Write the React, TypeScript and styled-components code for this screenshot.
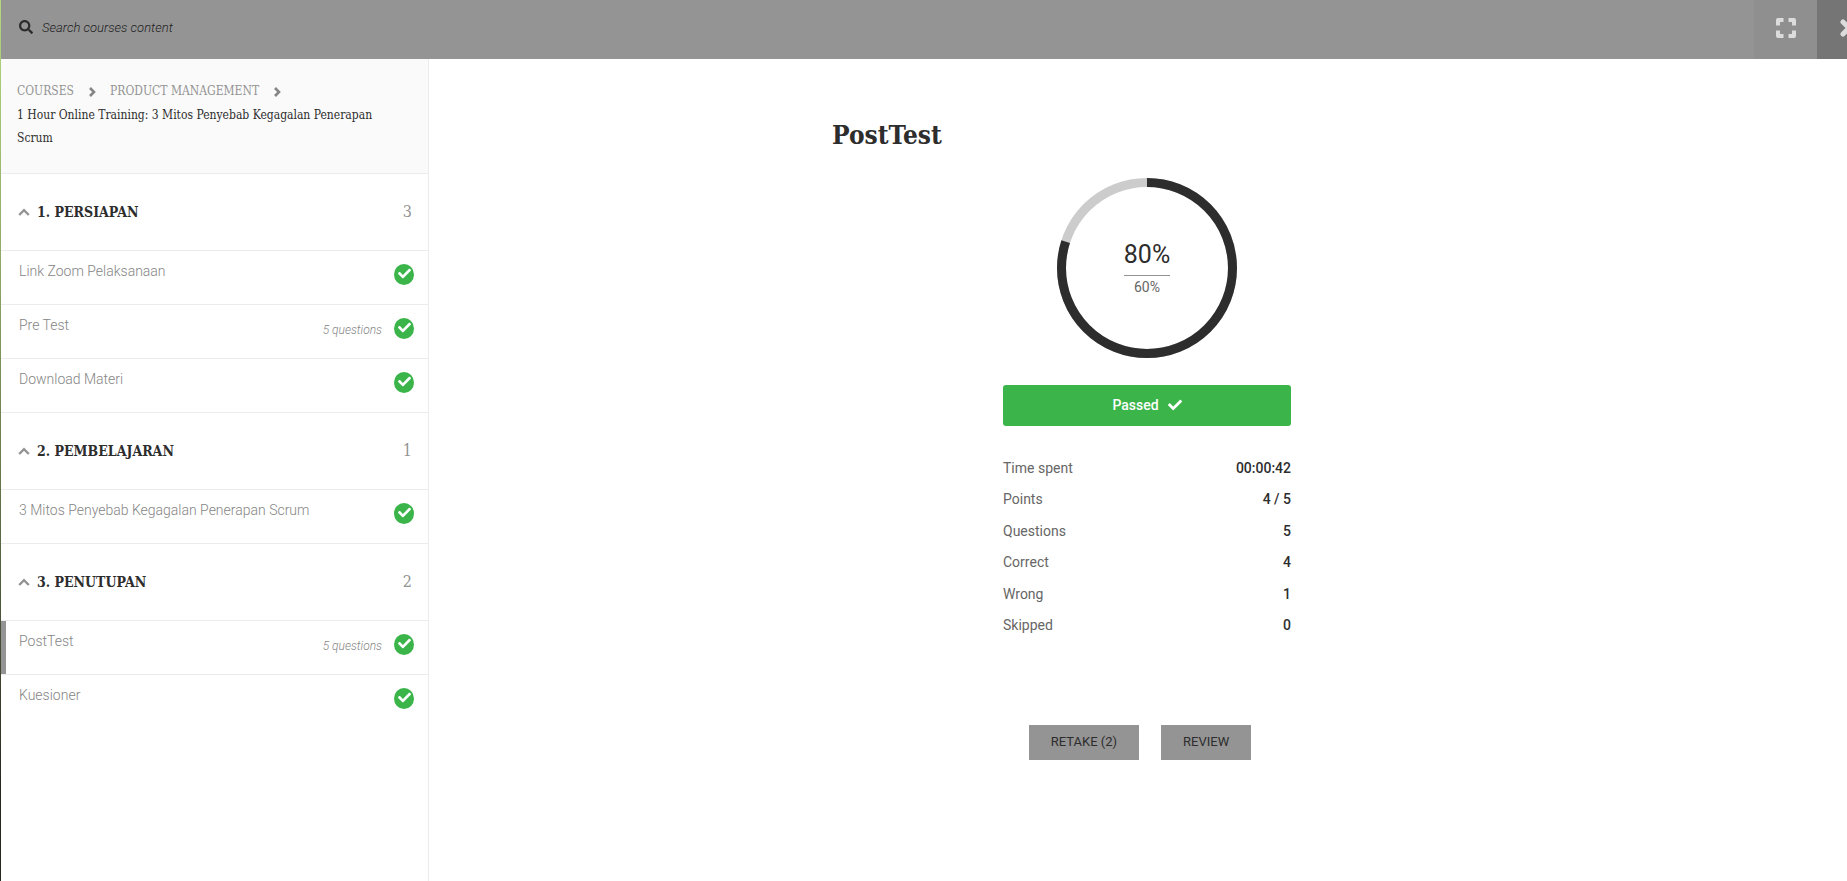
import React, { useState } from 'react';
import styled, { createGlobalStyle } from 'styled-components';
import { FaCheck, FaSearch } from 'react-icons/fa';

const sans = `Roboto, "Liberation Sans", sans-serif`;
const slab = `"Roboto Slab", "DejaVu Serif Condensed", "DejaVu Serif", serif`;

const GlobalStyle = createGlobalStyle`
  *, *::before, *::after { box-sizing: border-box; }
  body {
    margin: 0;
    background: #fff;
    color: #2d2d2d;
    font-family: ${sans};
    overflow-x: hidden;
  }
  button, input { font: inherit; color: inherit; }
`;

const Page = styled.div`
  display: grid;
  grid-template-columns: 1px minmax(0, 1fr);
  min-height: 100vh;
`;

const EdgeStrip = styled.div`
  background: linear-gradient(#b5d87f 0, #8fa866 30%, #5d6b45 60%, #26261f 90%);
`;

const Shell = styled.div`
  display: flex;
  flex-direction: column;
`;

const TopBar = styled.header`
  display: flex;
  height: 59px;
  background: #949494;
  overflow: hidden;
`;

const Search = styled.label`
  display: flex;
  flex: 1;
  align-items: center;
  gap: 9px;
  padding: 0 18px 5px;
  font-size: 14px;
`;

const SearchInput = styled.input`
  flex: 1;
  padding: 0;
  border: 0;
  outline: 0;
  background: none;
  font-size: 13px;
  font-style: italic;
  font-weight: 300;
  &::placeholder { color: #1f1f1f; opacity: 1; }
`;

const BarButton = styled.button<{ $close?: boolean }>`
  display: flex;
  flex: none;
  align-items: center;
  justify-content: center;
  width: 63px;
  padding: 0 0 4px;
  border: 0;
  margin-right: ${p => (p.$close ? '-33px' : '0')};
  background: ${p => (p.$close ? '#757575' : '#8f8f8f')};
  color: #dcdcdc;
`;

const Columns = styled.div`
  display: grid;
  flex: 1;
  grid-template-columns: 428px minmax(0, 1fr);
`;

const Sidebar = styled.aside`
  border-right: 1px solid #ececec;
`;

const Breadcrumbs = styled.nav`
  height: 115px;
  padding: 20px 28px 0 16px;
  border-bottom: 1px solid #ececec;
  background: #fafafa;
  font-family: ${slab};
  font-size: 12px;
  line-height: 23px;
`;

const Trail = styled.div`
  display: flex;
  align-items: center;
  gap: 14px;
  height: 25px;
`;

const TrailLink = styled.a`
  color: #939393;
  text-decoration: none;
  text-transform: uppercase;
`;

const SectionHead = styled.button`
  display: flex;
  align-items: center;
  width: 100%;
  height: 77px;
  padding: 0 16px 1px 17px;
  border: 0;
  border-bottom: 1px solid #ececec;
  background: none;
  text-align: left;
`;

const SectionTitle = styled.span`
  flex: 1;
  padding-left: 7px;
  font-family: ${slab};
  font-size: 14px;
  font-weight: 700;
  text-transform: uppercase;
`;

const Count = styled.span`
  color: #939393;
  font-family: ${slab};
  font-size: 16px;
`;

const Lessons = styled.ul`
  margin: 0;
  padding: 0;
  list-style: none;
`;

const Lesson = styled.li<{ $last: boolean }>`
  border-bottom: ${p => (p.$last ? '0' : '1px solid #ececec')};
`;

const LessonLink = styled.a<{ $active?: boolean }>`
  display: flex;
  align-items: flex-start;
  height: 53px;
  padding: 13px 14px 0 ${p => (p.$active ? '13px' : '18px')};
  border-left: ${p => (p.$active ? '5px solid #949494' : '0')};
  color: #858585;
  font-size: 14px;
  font-weight: 300;
  line-height: 15px;
  text-decoration: none;
`;

const LessonName = styled.span`
  flex: 1;
`;

const Note = styled.span`
  margin-right: 12px;
  font-size: 12px;
  font-style: italic;
  line-height: 24px;
`;

const Done = styled.span`
  display: flex;
  justify-content: center;
  width: 20px;
  height: 21px;
  padding-top: 3px;
  border-radius: 50%;
  background: #3bb44a;
  color: #fff;
  font-size: 13px;
`;

const Main = styled.main`
  padding: 58px 0 40px 18px;
`;

const Result = styled.section`
  display: flex;
  flex-direction: column;
  align-items: center;
  max-width: 630px;
  margin: 0 auto;
`;

const Title = styled.h1`
  align-self: flex-start;
  margin: 0 0 24px;
  font-family: ${slab};
  font-size: 26px;
  font-weight: 700;
  line-height: 37px;
`;

const Gauge = styled.div`
  display: grid;
  place-items: center;
  > * { grid-area: 1 / 1; }
`;

const Score = styled.div`
  text-align: center;
`;

const Percent = styled.div`
  padding-bottom: 3px;
  border-bottom: 1px solid #939393;
  font-size: 25px;
  font-weight: 400;
  line-height: 34px;
`;

const PassMark = styled.div`
  color: #666;
  font-size: 14px;
  line-height: 23px;
`;

const Summary = styled.div`
  width: 288px;
  margin-top: 27px;
`;

const Passed = styled.div`
  display: flex;
  align-items: center;
  justify-content: center;
  gap: 9px;
  height: 41px;
  padding-bottom: 2px;
  border-radius: 3px;
  background: #3bb44a;
  color: #fff;
  font-size: 14px;
  font-weight: 500;
`;

const Stats = styled.table`
  width: 100%;
  height: 189px;
  margin-top: 26px;
  border-collapse: collapse;
  font-size: 14px;
  th, td { padding: 0; }
  th { color: #666; font-weight: 400; text-align: left; }
  td { font-weight: 500; text-align: right; }
`;

const Actions = styled.div`
  display: flex;
  gap: 22px;
  margin: 84px 14px 0 0;
`;

const ActionButton = styled.button`
  height: 35px;
  padding: 0 22px 2px;
  border: 0;
  background: #949494;
  color: #2d2d2d;
  font-size: 13px;
  text-transform: uppercase;
`;

interface LessonData { name: string; note?: string; active?: boolean }

const sections: { title: string; lessons: LessonData[] }[] = [
  {
    title: '1. Persiapan',
    lessons: [
      { name: 'Link Zoom Pelaksanaan' },
      { name: 'Pre Test', note: '5 questions' },
      { name: 'Download Materi' },
    ],
  },
  { title: '2. Pembelajaran', lessons: [{ name: '3 Mitos Penyebab Kegagalan Penerapan Scrum' }] },
  { title: '3. Penutupan', lessons: [{ name: 'PostTest', note: '5 questions', active: true }, { name: 'Kuesioner' }] },
];

const stats = [
  ['Time spent', '00:00:42'],
  ['Points', '4 / 5'],
  ['Questions', '5'],
  ['Correct', '4'],
  ['Wrong', '1'],
  ['Skipped', '0'],
];

const ChevronUp = () => (
  <svg width="12" height="8" viewBox="0 0 12 8" fill="none" stroke="#939393" strokeWidth="2.400" aria-hidden="true">
    <path d="M1.200 7 6 2.200 10.800 7" />
  </svg>
);

const TrailArrow = () => (
  <svg width="8" height="10" viewBox="0 0 8 10" fill="none" stroke="#858585" strokeWidth="2.600" aria-hidden="true">
    <path d="M2 1l4 4-4 4" />
  </svg>
);

const FullscreenIcon = () => (
  <svg width="20" height="20" viewBox="0 0 20 20" fill="none" stroke="currentColor" strokeWidth="4" strokeLinejoin="round" aria-hidden="true">
    <path d="M2 7.500V2h5.500M12.500 2H18v5.500M18 12.500V18h-5.500M7.500 18H2v-5.500" />
  </svg>
);

const CloseIcon = () => (
  <svg width="18" height="18" viewBox="0 0 18 18" stroke="currentColor" strokeWidth="5" strokeLinecap="round" aria-hidden="true">
    <path d="m3 3 12 12M15 3 3 15" />
  </svg>
);

const Ring = ({ value }: { value: number }) => (
  <svg width="180" height="180" viewBox="0 0 180 180" fill="none" strokeWidth="9" role="img" aria-label="Score">
    <circle cx="90" cy="90" r="85.5" stroke="#ccc" />
    <circle cx="90" cy="90" r="85.5" stroke="#2d2d2d" pathLength="100" strokeDasharray={`${value} 100`} transform="rotate(-90 90 90)" />
  </svg>
);

const Section = ({ title, lessons, last }: { title: string; lessons: LessonData[]; last: boolean }) => {
  const [open, setOpen] = useState(true);
  return (
    <section>
      <SectionHead aria-expanded={open} onClick={() => setOpen(!open)}>
        <ChevronUp />
        <SectionTitle>{title}</SectionTitle>
        <Count>{lessons.length}</Count>
      </SectionHead>
      {open && (
        <Lessons>
          {lessons.map((l, i) => (
            <Lesson key={l.name} $last={last && i === lessons.length - 1}>
              <LessonLink href="#" $active={l.active}>
                <LessonName>{l.name}</LessonName>
                {l.note && <Note>{l.note}</Note>}
                <Done><FaCheck /></Done>
              </LessonLink>
            </Lesson>
          ))}
        </Lessons>
      )}
    </section>
  );
};

export default function App() {
  return (
    <>
      <GlobalStyle />
      <Page>
        <EdgeStrip />
        <Shell>
          <TopBar>
            <Search>
              <FaSearch />
              <SearchInput type="text" placeholder="Search courses content" aria-label="Search courses content" />
            </Search>
            <BarButton aria-label="Fullscreen"><FullscreenIcon /></BarButton>
            <BarButton $close aria-label="Close"><CloseIcon /></BarButton>
          </TopBar>
          <Columns>
            <Sidebar>
              <Breadcrumbs>
                <Trail>
                  <TrailLink href="#">Courses</TrailLink>
                  <TrailArrow />
                  <TrailLink href="#">Product Management</TrailLink>
                  <TrailArrow />
                </Trail>
                1 Hour Online Training: 3 Mitos Penyebab Kegagalan Penerapan Scrum
              </Breadcrumbs>
              {sections.map((s, i) => (
                <Section key={s.title} {...s} last={i === sections.length - 1} />
              ))}
            </Sidebar>
            <Main>
              <Result>
                <Title>PostTest</Title>
                <Gauge>
                  <Ring value={80} />
                  <Score>
                    <Percent>80%</Percent>
                    <PassMark>60%</PassMark>
                  </Score>
                </Gauge>
                <Summary>
                  <Passed>Passed <FaCheck /></Passed>
                  <Stats>
                    <tbody>
                      {stats.map(([label, value]) => (
                        <tr key={label}>
                          <th scope="row">{label}</th>
                          <td>{value}</td>
                        </tr>
                      ))}
                    </tbody>
                  </Stats>
                </Summary>
                <Actions>
                  <ActionButton>Retake (2)</ActionButton>
                  <ActionButton>Review</ActionButton>
                </Actions>
              </Result>
            </Main>
          </Columns>
        </Shell>
      </Page>
    </>
  );
}
